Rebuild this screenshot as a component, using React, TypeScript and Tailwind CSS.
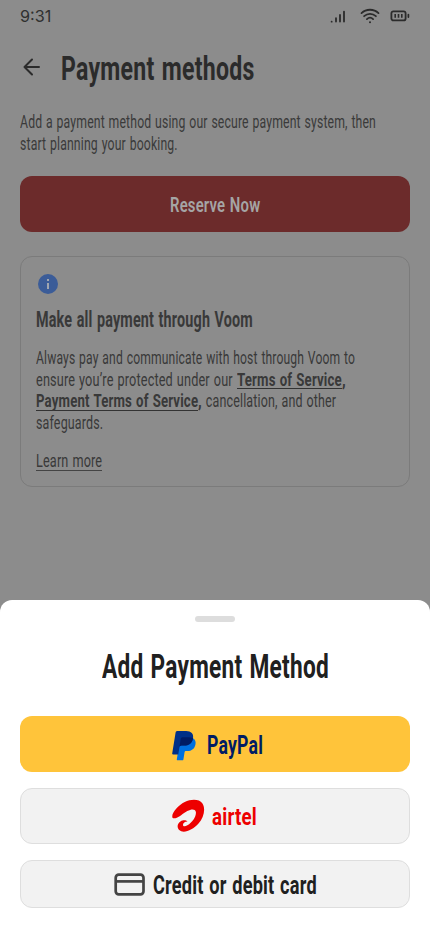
import { useLayoutEffect, useRef } from "react";
import type { ReactNode } from "react";

// Condensed lettering: squeezes one line of text into the width of its box.
function Fit({ className = "", children }: { className?: string; children: ReactNode }) {
  const box = useRef<HTMLSpanElement>(null);
  const inner = useRef<HTMLSpanElement>(null);
  useLayoutEffect(() => {
    if (box.current && inner.current) {
      inner.current.style.transform = `scaleX(${box.current.offsetWidth / inner.current.offsetWidth})`;
    }
  }, []);
  return (
    <span ref={box} className={`block shrink-0 ${className}`}>
      <span ref={inner} className="inline-block origin-left whitespace-nowrap align-top tracking-[0.012em] [word-spacing:0.05em]">
        {children}
      </span>
    </span>
  );
}

function Signal() {
  return (
    <svg width="16" height="14" viewBox="0 0 16 14" fill="none" stroke="#2b2b2b" strokeWidth="1.8" strokeLinecap="round">
      <path d="M1.6 11.7h.1M6 11.6V8.2M10 11.6V5M14 11.6V1.6" />
    </svg>
  );
}

function Wifi() {
  return (
    <svg width="20" height="16" viewBox="0 0 20 16" fill="none" stroke="#2b2b2b" strokeWidth="1.8" strokeLinecap="round">
      <path d="M1.5 5.1C6.2.6 13.8.6 18.5 5.1M4.1 8.2c3.4-3.2 8.4-3.2 11.8 0M6.9 11.1c1.8-1.7 4.4-1.7 6.2 0" />
      <circle cx="10" cy="14.2" r="1" fill="#2b2b2b" stroke="none" />
    </svg>
  );
}

function Battery() {
  return (
    <svg width="20" height="12" viewBox="0 0 20 12" fill="none" stroke="#2b2b2b" strokeWidth="1.8">
      <rect x="1.4" y="1.3" width="14.2" height="9.1" rx="2" />
      <path d="M5.2 4v3.8M8.5 4v3.8M11.8 4v3.8" strokeWidth="1.6" />
      <path d="M18.4 4.7v2.4" strokeLinecap="round" strokeWidth="1.7" />
    </svg>
  );
}

function PayPalMark() {
  return (
    <svg width="26" height="32" viewBox="0 0 26 32">
      <path
        d="M22 8.2c2.1 1.2 3 3.2 2.5 6-.8 4.6-3.8 6.8-8.2 6.8h-1.4c-.7 0-1.2.5-1.3 1.1l-1.2 7.3c-.1.6-.5.9-1.1.9H6.6c-.6 0-.9-.4-.8-1L9 10z"
        fill="#0070e0"
      />
      <path
        d="M1.2 23.6 4.6 2.5C4.8 1.5 5.5 1 6.4 1h8.7c5.1 0 7.8 2.8 6.9 7.4-.9 4.8-4.1 7.2-9.1 7.2h-2.4c-1.1 0-1.9.7-2.1 1.8L7.3 24.5H1.9c-.5 0-.8-.4-.7-.9z"
        fill="#003087"
      />
      <path
        d="M22 8.2c-.9 4.9-4.1 7.4-9.1 7.4h-2.4c-1.1 0-1.9.7-2.1 1.8l1.3-8.3c.2-1.2 1-1.8 2.1-1.8h6.1c1.7 0 3.1.3 4.1.9z"
        fill="#001c64"
      />
    </svg>
  );
}

function AirtelMark() {
  return (
    <svg width="34" height="34" viewBox="0 0 34 34">
      <path
        d="M1.4 18.4C.2 14 7 6.4 13.7 3 20.2-.2 28.3-.1 31.3 4.2c3.7 5.4 1.5 14.4-3.8 20.3-5 5.6-12.4 9.5-17.3 7.8-4.7-1.8-4.6-7.6-.8-9.9 3.3-2 6.6-.9 7 .1-2.6.2-4.3 1.6-4.4 3.3-.1 1.7 1.9 2 4.4.5 5.2-3 9.3-9.3 8.4-13.5-.7-3.2-4.5-2.9-8.5-.8-4.4 2.4-8.1 6.4-11.8 7.2-1.5.3-2.7.2-3.1-.8z"
        fill="#ed0000"
      />
    </svg>
  );
}

export default function App() {
  return (
    <div className="flex h-[932px] w-full max-w-[430px] flex-col overflow-hidden bg-[#8c8c8c] font-[Roboto,sans-serif] text-[#2b2b2b]">
      <header className="flex h-8 shrink-0 items-center justify-between px-5">
        <span className="font-[Inter,sans-serif] text-[16.2px] leading-8 text-[#303030]">9:31</span>
        <div className="flex items-center">
          <div className="mr-3.5 pt-0.5"><Signal /></div>
          <Wifi />
          <div className="ml-2.5"><Battery /></div>
        </div>
      </header>

      <div className="flex h-[79px] shrink-0 items-start pl-5 pt-4">
        <svg className="mt-[7px]" width="24" height="24" viewBox="0 0 24 24" fill="none" stroke="#2b2b2b" strokeWidth="2" strokeLinecap="round" strokeLinejoin="round">
          <path d="M19 12H4.5M12 4.5 4.5 12l7.5 7.5" />
        </svg>
        <h1 className="ml-[17px] text-[34px] font-bold leading-10">
          <Fit className="w-[194px]">Payment methods</Fit>
        </h1>
      </div>

      <p className="px-5 text-[19px] leading-[21.5px] text-[#3a3a3a]">
        <Fit className="w-[356px]">Add a payment method using our secure payment system, then</Fit>
        <Fit className="w-[158px]">start planning your booking.</Fit>
      </p>

      <button className="mx-5 mt-[22px] flex h-14 shrink-0 items-center justify-center rounded-xl bg-[#6c2b2b] pt-0.5 text-[21px] font-semibold leading-8 text-[#a5a5a5]">
        <Fit className="w-[90px]">Reserve Now</Fit>
      </button>

      <section className="mx-5 mt-6 h-[231px] shrink-0 rounded-xl border border-[#7b7b7b] px-[15px] pt-[15px] text-[#393939]">
        <svg width="24" height="24" viewBox="0 0 24 24">
          <circle cx="12" cy="12" r="10" fill="#3b5c98" />
          <path d="M11 7h2v2h-2zM11 11h2v6h-2z" fill="#a0a6b0" />
        </svg>
        <h2 className="mt-[9px] text-[21.5px] font-bold leading-[30px]">
          <Fit className="w-[217px]">Make all payment through Voom</Fit>
        </h2>
        <div className="mt-[11.6px] text-[19px] leading-[21.9px]">
          <Fit className="w-[319px]">Always pay and communicate with host through Voom to</Fit>
          <div className="flex">
            <Fit className="w-[201px]">ensure you’re protected under our&nbsp;</Fit>
            <Fit className="h-[20.5px] w-[105px] border-b border-[#333] font-bold">Terms of Service</Fit>
            <Fit className="w-[4px] font-bold">,</Fit>
          </div>
          <div className="flex">
            <Fit className="h-[20.5px] w-[162px] border-b border-[#333] font-bold">Payment Terms of Service</Fit>
            <Fit className="w-[4px] font-bold">,</Fit>
            <Fit className="w-[134px]">&nbsp;cancellation, and other</Fit>
          </div>
          <Fit className="w-[67px]">safeguards.</Fit>
          <Fit className="mt-[15.4px] h-[21px] w-[66px] border-b border-[#444]">Learn more</Fit>
        </div>
      </section>

      <section className="mt-auto flex h-[332px] shrink-0 flex-col rounded-t-xl bg-white px-5 pt-4 text-[#202020]">
        <div className="h-1.5 w-10 shrink-0 self-center rounded-full bg-[#dddddd]" />
        <h2 className="mt-6 self-center text-[34px] font-bold leading-10">
          <Fit className="w-[227px]">Add Payment Method</Fit>
        </h2>
        <div className="mt-[30px] flex flex-col gap-4">
          <button className="flex h-14 items-center rounded-xl bg-[#ffc43a] pl-[151px] text-[25.5px] font-bold leading-8 text-[#001c64]">
            <div className="mt-1"><PayPalMark /></div>
            <Fit className="ml-[10px] mt-0.5 w-[56px]">PayPal</Fit>
          </button>
          <button className="flex h-14 items-center rounded-xl border border-[#dedede] bg-[#f2f2f2] pl-[150px] text-[24.5px] font-bold leading-8 text-[#ed0000]">
            <AirtelMark />
            <Fit className="ml-[7px] mt-0.5 w-[45px]">airtel</Fit>
          </button>
          <button className="flex h-12 items-center rounded-xl border border-[#dedede] bg-[#f2f2f2] pl-[93px] pt-px text-[26px] font-bold leading-8">
            <svg width="32" height="24" viewBox="0 0 32 24" fill="none" stroke="#444" strokeWidth="2.7">
              <rect x="1.7" y="1.7" width="27.8" height="19.6" rx="3" />
              <path d="M2 8.4h27" />
            </svg>
            <Fit className="ml-[7px] mt-px w-[164px]">Credit or debit card</Fit>
          </button>
        </div>
      </section>
    </div>
  );
}
